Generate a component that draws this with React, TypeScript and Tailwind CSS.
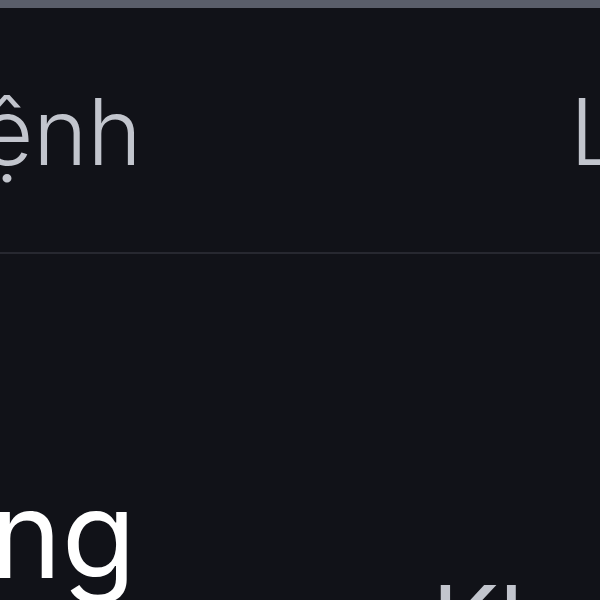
export default function App() {
  return (
    <div className="flex h-[600px] w-[600px] flex-col overflow-hidden bg-[#111218] font-['Inter',_sans-serif]">
      <div className="h-2 shrink-0 bg-[#5a5e6a]" />
      <div className="flex h-[246px] shrink-0 items-end justify-between border-b-2 border-[#272830] pb-[74px]">
        <span className="ml-[-72px] whitespace-nowrap text-[92px] font-light leading-none text-[#c2c5cd]">Lệnh</span>
        <span className="w-[30px] shrink-0 whitespace-nowrap text-[92px] font-light leading-none text-[#c2c5cd]">Loại lệnh</span>
      </div>
      <div className="flex items-start justify-between pt-[220px]">
        <span className="ml-[-165px] whitespace-nowrap text-[121px] leading-none text-white">Đang</span>
        <span className="mt-[98px] w-[168px] shrink-0 whitespace-nowrap text-[100px] leading-none text-[#c2c5cd]">Khung</span>
      </div>
    </div>
  );
}
